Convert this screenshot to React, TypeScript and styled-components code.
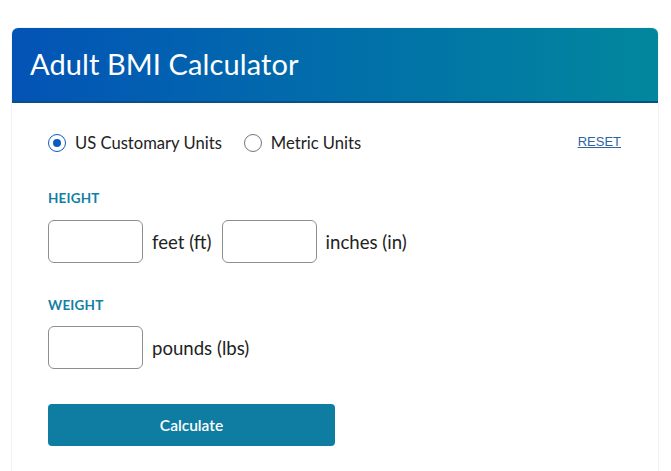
import React from "react";
import styled, { createGlobalStyle } from "styled-components";

const Global = createGlobalStyle`
  html, body { margin: 0; padding: 0; background: #fff; }
  body { font-family: "Lato", "Liberation Sans", sans-serif; }
  * { box-sizing: border-box; }
`;

const Page = styled.div`
  padding: 28px 13px 0 12px;
  width: 671px;
`;

const Card = styled.div`
  border-radius: 6px 6px 0 0;
  box-shadow: 0 0 0 1px #f3f3f3;
  background: #fff;
  min-height: 443px;
`;

const Header = styled.div`
  height: 75px;
  border-radius: 6px 6px 0 0;
  background: linear-gradient(90deg, #0353b6 0%, #016eaa 50%, #02879d 100%);
  border-bottom: 2px solid #0a4f86;
  display: flex;
  align-items: center;
  padding: 0 0 3px 18px;
`;

const Title = styled.h1`
  margin: 0;
  color: #fff;
  font-family: "Lato", "Inter", sans-serif;
  font-weight: 400;
  font-size: 29px;
  letter-spacing: 0.1px;
`;

const Body = styled.div`
  padding: 30px 36px 20px 36px;
  font-family: "Lato", "Open Sans", sans-serif;
  color: #222;
`;

const TopRow = styled.div`
  display: flex;
  align-items: center;
  justify-content: space-between;
`;

const Radios = styled.div`
  display: flex;
  align-items: center;
  gap: 22px;
`;

const RadioLabel = styled.label`
  display: flex;
  align-items: center;
  gap: 9px;
  font-size: 16.6px;
  color: #222;
`;

const RadioCircle = styled.span<{ $checked?: boolean }>`
  width: 18px;
  height: 18px;
  border-radius: 50%;
  border: 1.5px solid ${(p) => (p.$checked ? "#0b5cc0" : "#777")};
  display: flex;
  align-items: center;
  justify-content: center;
  &::after {
    content: "";
    width: 8px;
    height: 8px;
    border-radius: 50%;
    background: ${(p) => (p.$checked ? "#0b5cc0" : "transparent")};
  }
`;

const Reset = styled.a`
  font-family: "Liberation Sans", Arial, sans-serif;
  font-size: 13px;
  color: #2f64a0;
  text-decoration: underline;
  margin-right: 1px;
  margin-top: -4px;
`;

const SectionLabel = styled.div<{ $top: number }>`
  margin-top: ${(p) => p.$top}px;
  font-family: "Lato", sans-serif;
  font-weight: 700;
  font-size: 13.5px;
  color: #127fa4;
  letter-spacing: 0.2px;
`;

const FieldRow = styled.div<{ $top: number }>`
  display: flex;
  align-items: center;
  margin-top: ${(p) => p.$top}px;
  gap: 9px;
`;

const Input = styled.input`
  width: 95px;
  height: 43px;
  border: 1px solid #8e8e8e;
  border-radius: 6px;
  font-size: 16px;
  padding: 0 8px;
`;

const Unit = styled.span`
  font-size: 18.6px;
  color: #222;
  margin-right: 1px;
`;

const Button = styled.button`
  margin-top: 35px;
  width: 287px;
  height: 42px;
  border: none;
  border-radius: 4px;
  background: #0f7da1;
  color: #fff;
  font-family: "Lato", sans-serif;
  font-weight: 600;
  font-size: 15.5px;
`;

export default function App() {
  return (
    <>
      <Global />
      <Page>
        <Card>
          <Header>
            <Title>Adult BMI Calculator</Title>
          </Header>
          <Body>
            <TopRow>
              <Radios>
                <RadioLabel>
                  <RadioCircle $checked />
                  US Customary Units
                </RadioLabel>
                <RadioLabel>
                  <RadioCircle />
                  Metric Units
                </RadioLabel>
              </Radios>
              <Reset href="#">RESET</Reset>
            </TopRow>
            <SectionLabel $top={37}>HEIGHT</SectionLabel>
            <FieldRow $top={14}>
              <Input />
              <Unit>feet (ft)</Unit>
              <Input />
              <Unit>inches (in)</Unit>
            </FieldRow>
            <SectionLabel $top={34}>WEIGHT</SectionLabel>
            <FieldRow $top={13}>
              <Input />
              <Unit>pounds (lbs)</Unit>
            </FieldRow>
            <Button>Calculate</Button>
          </Body>
        </Card>
      </Page>
    </>
  );
}
